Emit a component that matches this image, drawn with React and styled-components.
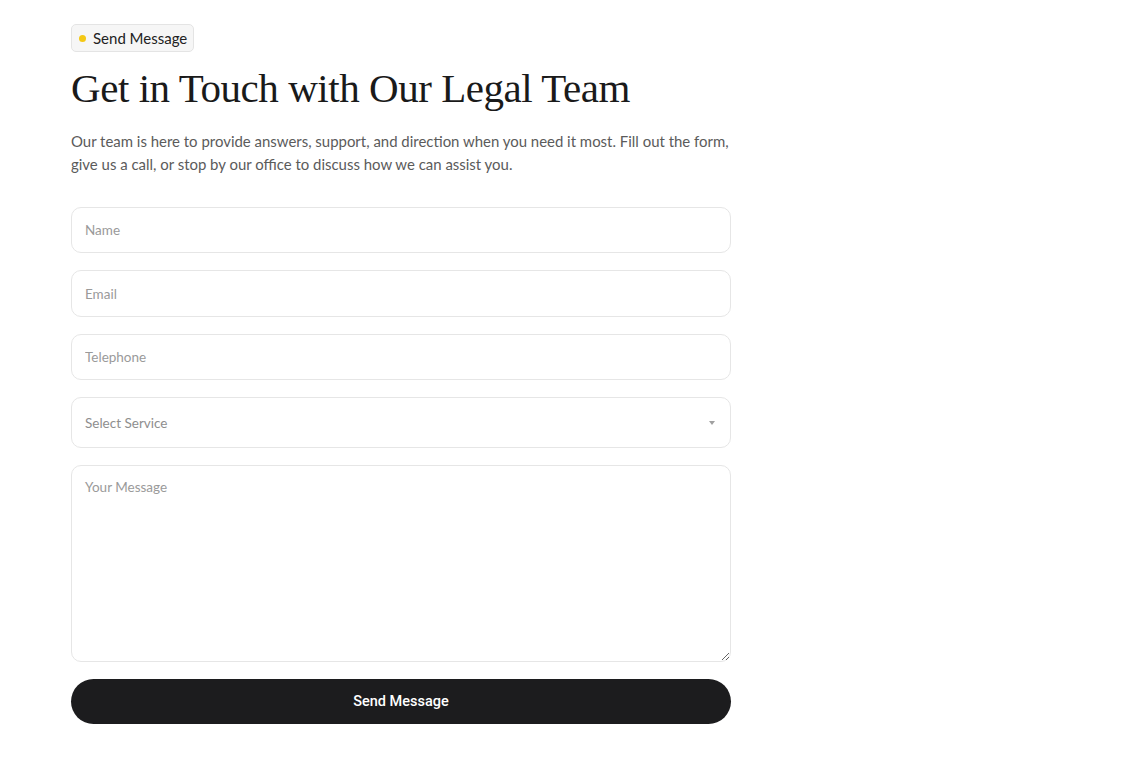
import styled, { createGlobalStyle } from "styled-components";

const GlobalStyle = createGlobalStyle`
  * { box-sizing: border-box; }
  body {
    margin: 0;
    background: #ffffff;
    font-family: "Lato", "Liberation Sans", sans-serif;
    color: #1c1c1e;
  }
`;

const Page = styled.main`
  padding: 24px 0 0 71px;
`;

const Section = styled.section`
  width: 660px;
  display: flex;
  flex-direction: column;
`;

const Badge = styled.div`
  align-self: flex-start;
  display: inline-flex;
  align-items: center;
  gap: 7px;
  height: 28px;
  padding: 0 6px 0 7px;
  border: 1px solid #e4e4e4;
  border-radius: 5px;
  background: #f6f6f6;
  font-size: 15px;
  color: #222;
`;

const Dot = styled.span`
  width: 7px;
  height: 7px;
  border-radius: 50%;
  background: #f4c814;
`;

const Title = styled.h1`
  margin: 11px 0 0;
  font-family: "Liberation Serif", serif;
  font-weight: 400;
  font-size: 41px;
  line-height: 50px;
  color: #1a1a1a;
  letter-spacing: -0.45px;
`;

const Lead = styled.p`
  margin: 17px 0 0;
  font-size: 14.95px;
  line-height: 23px;
  color: #5b5b5b;
`;

const Form = styled.form`
  margin-top: 31px;
  display: flex;
  flex-direction: column;
  gap: 17px;
`;

const field = `
  width: 100%;
  border: 1px solid #e6e6e6;
  border-radius: 10px;
  background: #fff;
  font-family: "Lato", "Liberation Sans", sans-serif;
  font-size: 13.5px;
  color: #1c1c1e;
  padding: 0 13px;
  outline: none;
  &::placeholder { color: #9a9a9a; }
`;

const Input = styled.input`
  ${field}
  height: 46.4px;
`;

const Select = styled.select`
  ${field}
  height: 51px;
  color: #8e8e8e;
  appearance: none;
  background-image: url("data:image/svg+xml;utf8,<svg xmlns='http://www.w3.org/2000/svg' width='6' height='4'><path d='M0 0h6L3 4z' fill='%23a0a0a0'/></svg>");
  background-repeat: no-repeat;
  background-position: right 15px center;
`;

const TextArea = styled.textarea`
  ${field}
  height: 197px;
  padding: 13px;
  resize: vertical;
`;

const Submit = styled.button`
  height: 45px;
  border: none;
  border-radius: 23px;
  background: #1c1c1e;
  color: #fff;
  font-family: "Roboto", "Liberation Sans", sans-serif;
  font-size: 14.5px;
  font-weight: 500;
`;

export default function App() {
  return (
    <>
      <GlobalStyle />
      <Page>
        <Section>
          <Badge>
            <Dot />
            Send Message
          </Badge>
          <Title>Get in Touch with Our Legal Team</Title>
          <Lead>
            Our team is here to provide answers, support, and direction when you need it most. Fill out the form,
            give us a call, or stop by our office to discuss how we can assist you.
          </Lead>
          <Form onSubmit={(e) => e.preventDefault()}>
            <Input placeholder="Name" />
            <Input placeholder="Email" />
            <Input placeholder="Telephone" />
            <Select defaultValue="">
              <option value="" disabled>Select Service</option>
              <option>Corporate Law</option>
              <option>Family Law</option>
            </Select>
            <TextArea placeholder="Your Message" />
            <Submit type="submit">Send Message</Submit>
          </Form>
        </Section>
      </Page>
    </>
  );
}
